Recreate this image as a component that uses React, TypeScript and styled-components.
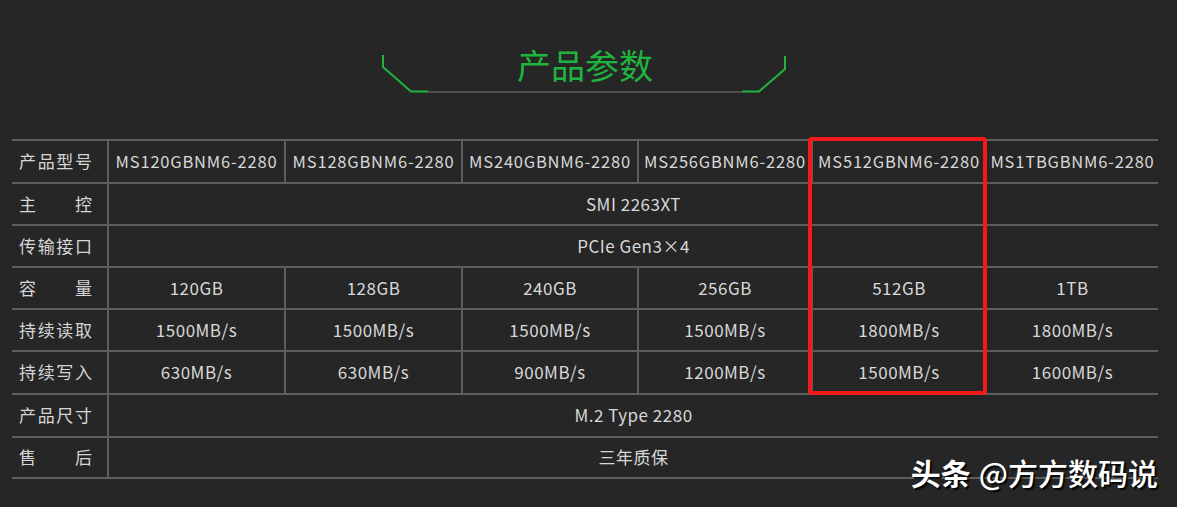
import React from "react";
import styled, { createGlobalStyle } from "styled-components";

const GlobalStyle = createGlobalStyle`
  html, body {
    margin: 0;
    padding: 0;
    background: #262626;
  }
  body {
    font-family: "Noto Sans CJK SC", "Noto Sans", sans-serif;
    color: #dcdcdc;
  }
`;

const LINE = "#5e5e5e";

const Page = styled.div`
  position: relative;
  width: 1177px;
  height: 507px;
  box-sizing: border-box;
  padding: 0 19px 0 12px;
  overflow: hidden;
`;

const Header = styled.header`
  height: 139px;
  box-sizing: border-box;
  padding-top: 48px;
  display: flex;
  justify-content: center;
  align-items: flex-start;
`;

const Corner = styled.svg`
  display: block;
  margin-top: 7px;
  flex: none;
`;

const TitleColumn = styled.div`
  width: 314px;
  display: flex;
  flex-direction: column;
  align-items: center;
`;

const Title = styled.h1`
  margin: 0 0 9px;
  font-size: 34px;
  line-height: 34px;
  font-weight: 400;
  color: #1fb33f;
  letter-spacing: 0;
`;

const Rule = styled.div`
  align-self: stretch;
  height: 2px;
  background: #4e4e4e;
`;

const TableWrap = styled.div`
  position: relative;
`;

const Grid = styled.div`
  display: grid;
  grid-template-columns: 95px 177px 177px 176px 174px 174px 173px;
  grid-template-rows: 43px 42px 42px 42px 42px 43px 43px 41px;
  border-top: 2px solid ${LINE};
`;

const LabelCell = styled.div`
  box-sizing: border-box;
  border-bottom: 2px solid ${LINE};
  padding: 0 15px 2px 7px;
  display: flex;
  align-items: center;
`;

const LabelText = styled.div`
  flex: 1;
  display: flex;
  justify-content: space-between;
  font-size: 17px;
  color: #d6d6d6;
`;

const Cell = styled.div<{ $span?: number; $head?: boolean }>`
  box-sizing: border-box;
  grid-column: span ${(p) => p.$span ?? 1};
  border-bottom: 2px solid ${LINE};
  border-left: 2px solid ${LINE};
  padding-bottom: 2px;
  display: flex;
  align-items: center;
  justify-content: center;
  white-space: nowrap;
  font-size: ${(p) => (p.$head ? "16.5px" : "17px")};
  letter-spacing: ${(p) => (p.$head ? "0.8px" : "0.5px")};
  color: #d8d8d8;
`;

const Highlight = styled.div`
  position: absolute;
  left: 796px;
  top: -2px;
  width: 179px;
  height: 258px;
  box-sizing: border-box;
  border: 4px solid #f51a1a;
  border-radius: 4px;
  pointer-events: none;
`;

const Watermark = styled.div`
  position: absolute;
  top: 455px;
  right: 19px;
  font-size: 30px;
  line-height: 34px;
  color: #ffffff;
  font-weight: 500;
  text-shadow: 2px 2px 1px rgba(0, 0, 0, 0.85);
  white-space: nowrap;
`;

const Brand = styled.span`
  font-weight: 700;
  margin-right: 8px;
`;

type Row =
  | { label: string; values: string[]; head?: boolean }
  | { label: string; merged: string };

const rows: Row[] = [
  {
    label: "产品型号",
    head: true,
    values: [
      "MS120GBNM6-2280",
      "MS128GBNM6-2280",
      "MS240GBNM6-2280",
      "MS256GBNM6-2280",
      "MS512GBNM6-2280",
      "MS1TBGBNM6-2280",
    ],
  },
  { label: "主控", merged: "SMI 2263XT" },
  { label: "传输接口", merged: "PCIe Gen3×4" },
  { label: "容量", values: ["120GB", "128GB", "240GB", "256GB", "512GB", "1TB"] },
  {
    label: "持续读取",
    values: ["1500MB/s", "1500MB/s", "1500MB/s", "1500MB/s", "1800MB/s", "1800MB/s"],
  },
  {
    label: "持续写入",
    values: ["630MB/s", "630MB/s", "900MB/s", "1200MB/s", "1500MB/s", "1600MB/s"],
  },
  { label: "产品尺寸", merged: "M.2 Type 2280" },
  { label: "售后", merged: "三年质保" },
];

const Label = ({ text }: { text: string }) => (
  <LabelCell>
    <LabelText>
      {Array.from(text).map((c, i) => (
        <span key={i}>{c}</span>
      ))}
    </LabelText>
  </LabelCell>
);

export default function App() {
  return (
    <>
      <GlobalStyle />
      <Page>
        <Header>
          <Corner width="46" height="38" viewBox="0 0 46 38">
            <polyline
              points="1,0 1,12 29,36.5 46,36.5"
              fill="none"
              stroke="#1fb33f"
              strokeWidth="2"
            />
          </Corner>
          <TitleColumn>
            <Title>产品参数</Title>
            <Rule />
          </TitleColumn>
          <Corner width="46" height="38" viewBox="0 0 46 38">
            <polyline
              points="0,36.5 17,36.5 43,14 43,1"
              fill="none"
              stroke="#1fb33f"
              strokeWidth="2"
            />
          </Corner>
        </Header>
        <TableWrap>
          <Grid>
            {rows.map((r, i) => (
              <React.Fragment key={i}>
                <Label text={r.label} />
                {"merged" in r ? (
                  <Cell $span={6}>{r.merged}</Cell>
                ) : (
                  r.values.map((v, j) => (
                    <Cell key={j} $head={r.head}>
                      {v}
                    </Cell>
                  ))
                )}
              </React.Fragment>
            ))}
          </Grid>
          <Highlight />
        </TableWrap>
        <Watermark>
          <Brand>头条</Brand>@方方数码说
        </Watermark>
      </Page>
    </>
  );
}
